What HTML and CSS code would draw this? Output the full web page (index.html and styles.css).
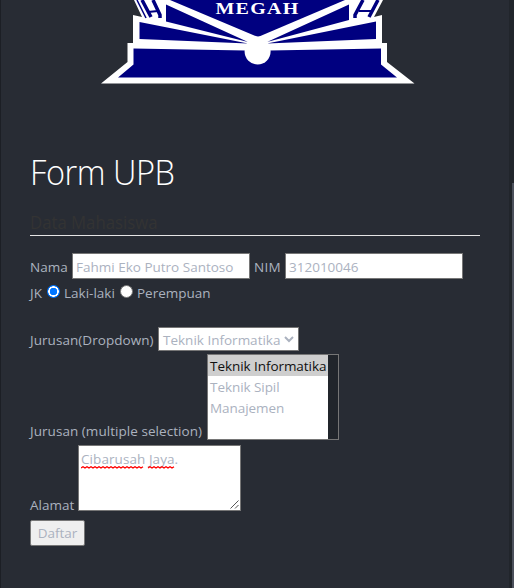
FILE: index.html
```html
<!DOCTYPE html>
<html lang="id">
<head>
<meta charset="utf-8">
<title>Form UPB</title>
<link rel="stylesheet" href="styles.css">
</head>
<body>
<main class="page">
  <svg class="logo" width="314" height="84" viewBox="101 0 314 84" role="img">
    <path fill="#fff" d="M101 83.5 127.5 62V43H133V15L142 17 134 0H383L374 17 382 15V43H387V62L414.5 83.5Z"/>
    <g fill="#000080">
      <path d="M118 77.5 133.5 64.5V48.5L245 50.5H270L381 48.5V64.5L397 77.5Z"/>
      <path d="M139.5 22V39L248 43.5ZM376 21.5V39L267 43.5Z"/>
      <path d="M166 4.5V21.5L248 42ZM349 4.5V20L267 42Z"/>
      <path d="M170 0H345L258 37Z"/>
    </g>
    <g fill="none" stroke="#000080">
      <path stroke-width="1.5" d="M137 0 146 18"/>
      <path stroke-width="3.5" d="M142 0 151 17M153 0 160 15V18M378 0 369 17M363 0 355 15V18"/>
      <path stroke-width="2" d="M148 12 158 11M372 11H359"/>
    </g>
    <circle cx="257.6" cy="51.5" r="13" fill="#fff"/>
    <path fill="#fff" d="M248 40 253 36.5H263L267 40 270 50H245Z"/>
    <text class="logo-text" x="257.5" y="14" text-anchor="middle" textLength="84" lengthAdjust="spacingAndGlyphs">MEGAH</text>
  </svg>
  <h1 class="title"><span>Form UPB</span></h1>
  <form class="form">
    <h2 class="legend"><span>Data Mahasiswa</span></h2>
    <div class="row identity">
      <label class="l-nama">Nama</label><input class="field" value="Fahmi Eko Putro Santoso">
      <label class="l-nim">NIM</label><input class="field nim" value="312010046">
    </div>
    <div class="row gender">
      <label class="l-jk">JK</label><span class="radio checked"></span><label class="l-male">Laki-laki</label><span class="radio"></span><label class="l-female">Perempuan</label>
    </div>
    <div class="row dropdown">
      <label class="l-drop">Jurusan(Dropdown)</label>
      <div class="select"><span>Teknik Informatika</span><svg width="10" height="7" viewBox="0 0 10 7"><path d="M1 1 5 5 9 1" fill="none" stroke="#abb2bf" stroke-width="2"/></svg></div>
    </div>
    <div class="row multiple">
      <label class="l-multi">Jurusan (multiple selection)</label>
      <ul class="list"><li class="selected">Teknik Informatika</li><li>Teknik Sipil</li><li>Manajemen</li></ul>
    </div>
    <div class="row address">
      <label class="l-alamat">Alamat</label>
      <div class="area"><span>Cibarusah</span> <span>Jaya</span>.<svg class="marks" width="96" height="3" viewBox="0 0 96 3"><path d="M0 2 2 .7 4 2 6 .7 8 2 10 .7 12 2 14 .7 16 2 18 .7 20 2 22 .7 24 2 26 .7 28 2 30 .7 32 2 34 .7 36 2 38 .7 40 2 42 .7 44 2 46 .7 48 2 50 .7 52 2 54 .7 56 2 58 .7 60 2 62 .7M67 2 69 .7 71 2 73 .7 75 2 77 .7 79 2 81 .7 83 2 85 .7 87 2 89 .7 91 2 93 .7" fill="none" stroke="#f00" stroke-width="1.3"/></svg><svg class="grip" width="9" height="9" viewBox="0 0 9 9"><path d="M.5 8.5 8.5.5M5 8.5 8.5 5" stroke="#555" fill="none"/></svg></div>
    </div>
    <button class="submit" type="button">Daftar</button>
  </form>
</main>
<aside class="scrollbar"><div class="thumb"></div></aside>
</body>
</html>
```
FILE: styles.css
```css
* { box-sizing: border-box; }
body {
  margin: 0;
  height: 588px;
  overflow: hidden;
  display: flex;
  background: #282c34;
  border-left: 1px solid #1c1f25;
  color: #abb2bf;
  font: 13.5px/21px "Open Sans", "Noto Sans", sans-serif;
}
.page { width: 508px; padding: 0 29px; }
.logo { display: block; margin: 0 0 0 71px; }
.logo-text { font: bold 16px "Liberation Serif", serif; fill: #fff; letter-spacing: 1px; }
.title { margin: 63px 0 1px; height: 50px; font-size: 35px; line-height: 50px; font-weight: 300; color: #fff; letter-spacing: -.5px; }
.title span, .legend span { display: inline-block; transform-origin: 0 50%; transform: scaleX(.93); }
.legend { margin: 0; width: 450px; height: 38px; padding-top: 11px; border-bottom: 1px solid #e5e5e5; color: #333; font-size: 18px; line-height: 26px; font-weight: 400; }
.row { display: flex; white-space: nowrap; }
.row label { flex: none; }
.identity { margin-top: 17px; height: 26px; line-height: 28px; }
.l-nama { width: 42px; }
.field { width: 178px; height: 26px; padding: 2px 3px 0; border: 1px solid #767676; background: #fff; color: #abb2bf; font: inherit; line-height: 22px; }
.l-nim { width: 31px; margin-left: 4px; letter-spacing: .3px; }
.gender { height: 27px; padding-top: 4px; }
.l-jk { width: 17px; }
.radio { width: 13px; height: 13px; margin-top: 2px; border: 1px solid #767676; border-radius: 50%; background: #fff; }
.radio.checked { border: 0; background: radial-gradient(circle closest-side, #0075ff 3.5px, #fff 4px 5px, #0075ff 5.5px); }
.l-male { width: 60px; padding-left: 4px; }
.l-female { padding-left: 4px; }
.dropdown { margin-top: 21px; height: 24px; line-height: 26px; }
.l-drop { width: 128px; letter-spacing: .05px; }
.select { width: 141px; height: 24px; display: flex; align-items: center; justify-content: space-between; padding: 1px 4px 0; border: 1px solid #767676; background: #fff; }
.multiple { margin-top: 3px; height: 86px; align-items: flex-end; }
.l-multi { width: 177px; height: 19px; letter-spacing: .05px; }
.list { width: 132px; height: 86px; margin: 0; padding: 0 10px 0 0; list-style: none; border: 1px solid #767676; background: linear-gradient(to left, #21252b 10px, #fff 10px); }
.list li { height: 21px; padding-left: 2px; line-height: 23px; letter-spacing: -.06px; }
.list .selected { background: #cecece; color: #101010; }
.address { margin-top: 5px; height: 66px; align-items: flex-end; }
.l-alamat { width: 48px; height: 16px; }
.area { position: relative; width: 163px; height: 66px; padding: 3px 2px; border: 1px solid #767676; background: #fff; letter-spacing: .07px; }
.marks { position: absolute; left: 2px; top: 20px; }
.grip { position: absolute; right: 1px; bottom: 1px; }
.submit { display: block; width: 55px; height: 26px; margin-top: 9px; padding: 1px 0 0; border: 1px solid #767676; border-radius: 2px; background: #efefef; color: #abb2bf; font: inherit; }
.scrollbar { width: 5px; background: #21252b; padding: 183px 0 0 3px; }
.thumb { height: 405px; background: #4b505b; }
```
